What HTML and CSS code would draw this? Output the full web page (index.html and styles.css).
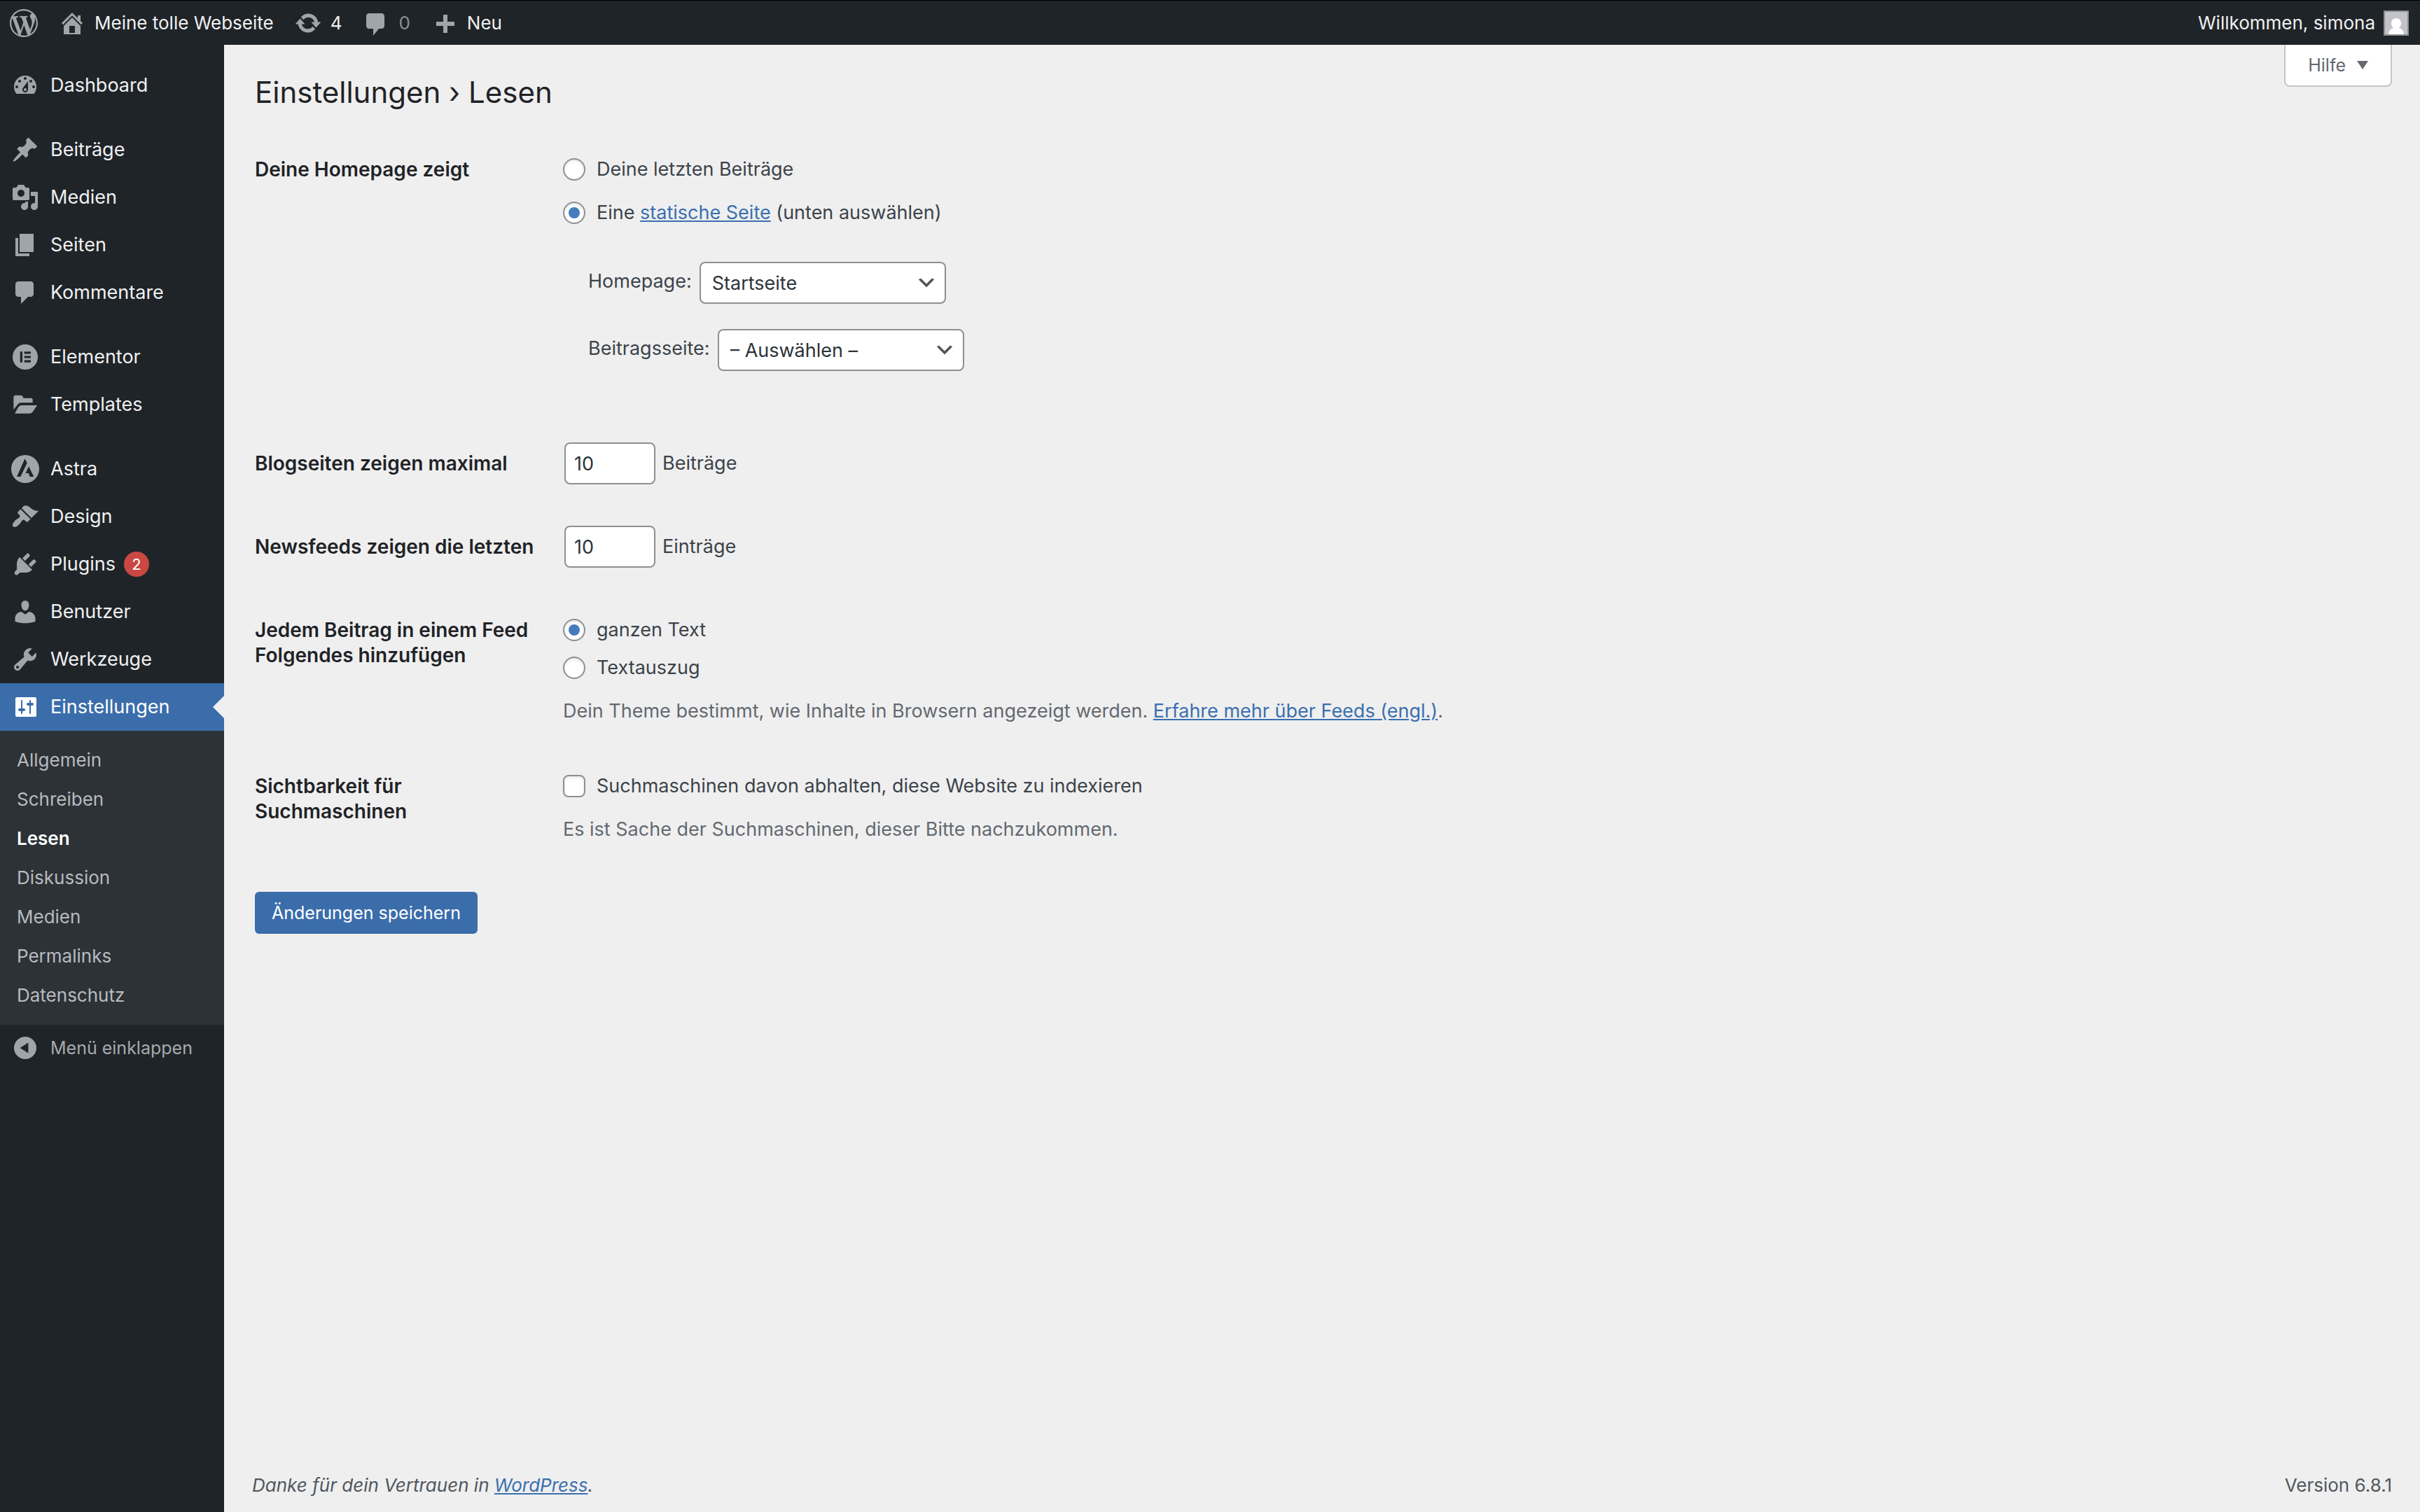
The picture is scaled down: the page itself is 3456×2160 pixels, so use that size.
FILE: index.html
```html
<!DOCTYPE html>
<html lang="de">
<head>
  <meta charset="UTF-8">
  <meta name="viewport" content="width=device-width, initial-scale=1">
  <title>Einstellungen › Lesen</title>
  <link rel="stylesheet" href="styles.css">
</head>
<body>
  <header class="adminbar">
    <a href="#" class="bar-item" aria-label="Über WordPress">
      <svg class="icon" viewBox="0 0 20 20"><path d="M20 10c0-5.51-4.49-10-10-10C4.48 0 0 4.49 0 10c0 5.52 4.48 10 10 10 5.51 0 10-4.48 10-10zM7.78 15.37L4.37 6.22c.55-.02 1.17-.08 1.17-.08.5-.06.44-1.13-.06-1.11 0 0-1.45.11-2.37.11-.18 0-.37 0-.58-.01C4.12 2.69 6.87 1.11 10 1.11c2.33 0 4.45.87 6.05 2.34-.68-.11-1.65.39-1.65 1.58 0 .74.45 1.36.9 2.1.35.61.55 1.36.55 2.46 0 1.49-1.4 5-1.4 5l-3.03-8.37c.54-.02.82-.17.82-.17.5-.05.44-1.25-.06-1.22 0 0-1.44.12-2.38.12-.87 0-2.33-.12-2.33-.12-.5-.03-.56 1.2-.06 1.22l.92.08 1.26 3.41zM17.41 10c.24-.64.74-1.87.43-4.25.7 1.29 1.05 2.71 1.05 4.25 0 3.29-1.73 6.24-4.4 7.78.97-2.59 1.94-5.2 2.92-7.78zM6.1 18.09C3.12 16.65 1.11 13.53 1.11 10c0-1.3.23-2.48.72-3.59C3.25 10.3 4.67 14.2 6.1 18.09zm4.03-6.63l2.58 6.98c-.86.29-1.76.45-2.71.45-.79 0-1.57-.11-2.29-.33.81-2.38 1.62-4.74 2.42-7.1z"/></svg>
    </a>
    <a href="#" class="bar-item">
      <svg class="icon" viewBox="0 0 20 20"><path d="M16 8.5l1.53 1.53-1.06 1.06L10 4.6l-6.47 6.47-1.06-1.06L10 2.5l4 4v-2h2v4zm-6-2.46l6 5.99V18H4v-5.97zM12 17v-5H8v5h4z"/></svg>
      Meine tolle Webseite
    </a>
    <a href="#" class="bar-item">
      <svg class="icon" viewBox="0 0 20 20"><path d="M10.2 3.28c3.53 0 6.43 2.61 6.92 6h2.08l-3.5 4-3.5-4h2.32c-.45-1.97-2.21-3.45-4.32-3.45-1.45 0-2.73.71-3.54 1.78L4.95 5.66C6.23 4.2 8.11 3.28 10.2 3.28zm-.4 13.44c-3.52 0-6.43-2.61-6.92-6H.8l3.5-4c1.17 1.33 2.33 2.67 3.5 4H5.48c.45 1.97 2.21 3.45 4.32 3.45 1.45 0 2.73-.71 3.54-1.78l1.71 1.95c-1.28 1.46-3.15 2.38-5.25 2.38z"/></svg>
      4
    </a>
    <a href="#" class="bar-item muted">
      <svg class="icon" viewBox="0 0 20 20"><path d="M5 3h9c1.1 0 2 .9 2 2v7c0 1.1-.9 2-2 2h-2l-4 5v-5H5c-1.1 0-2-.9-2-2V5c0-1.1.9-2 2-2z"/></svg>
      0
    </a>
    <a href="#" class="bar-item">
      <svg class="icon" viewBox="0 0 20 20"><path d="M17 9v3h-5v5H9v-5H4V9h5V4h3v5z"/></svg>
      Neu
    </a>
    <a href="#" class="bar-item account">
      Willkommen, simona
      <svg class="avatar" viewBox="0 0 36 36"><path fill="#8c8f94" d="M0 0h36v36H0z"/><path fill="#c3c4c7" d="M2 2h32v32H2z"/><path fill="#fff" d="M18 11c4 0 7 3 7 7 0 3-1 5-3 7 4 1 7 4 7 9H7c0-5 3-8 7-9-2-2-3-4-3-7 0-4 3-7 7-7z"/></svg>
    </a>
  </header>

  <div class="layout">
    <nav class="menu" aria-label="Hauptmenü">
      <ul class="menu-group">
        <li><a href="#" class="menu-link">
          <svg class="icon" viewBox="0 0 20 20"><path d="M3.76 16h12.48c1.1-1.37 1.76-3.11 1.76-5 0-4.42-3.58-8-8-8s-8 3.58-8 8c0 1.89.66 3.63 1.76 5zM10 4c.55 0 1 .45 1 1s-.45 1-1 1-1-.45-1-1 .45-1 1-1zM6 6c.55 0 1 .45 1 1s-.45 1-1 1-1-.45-1-1 .45-1 1-1zm8 0c.55 0 1 .45 1 1s-.45 1-1 1-1-.45-1-1 .45-1 1-1zm-5.37 5.55L12 7v6c0 1.1-.9 2-2 2s-2-.9-2-2c0-.57.24-1.08.63-1.45zM4 10c.55 0 1 .45 1 1s-.45 1-1 1-1-.45-1-1 .45-1 1-1zm12 0c.55 0 1 .45 1 1s-.45 1-1 1-1-.45-1-1 .45-1 1-1zm-5 3c0-.55-.45-1-1-1s-1 .45-1 1 .45 1 1 1 1-.45 1-1z"/></svg>
          Dashboard</a></li>
      </ul>
      <ul class="menu-group">
        <li><a href="#" class="menu-link">
          <svg class="icon" viewBox="0 0 20 20"><path d="M10.44 3.02l1.82-1.82 6.36 6.35-1.83 1.82c-1.05-.68-2.48-.57-3.41.36l-.75.75c-.92.93-1.04 2.35-.35 3.41l-1.83 1.82-2.41-2.41-2.8 2.79c-.42.42-3.38 2.71-3.8 2.29s1.86-3.39 2.28-3.81l2.79-2.79L4.1 9.36l1.83-1.82c1.05.69 2.48.57 3.4-.36l.75-.75c.93-.92 1.05-2.35.36-3.41z"/></svg>
          Beiträge</a></li>
        <li><a href="#" class="menu-link">
          <svg class="icon" viewBox="0 0 20 20"><path d="M13 11V4c0-.55-.45-1-1-1h-1.67L9 1H5L3.67 3H2c-.55 0-1 .45-1 1v7c0 .55.45 1 1 1h10c.55 0 1-.45 1-1zM7 4.5c1.38 0 2.5 1.12 2.5 2.5S8.38 9.5 7 9.5 4.5 8.38 4.5 7 5.62 4.5 7 4.5zM14 6h5v10.5c0 1.38-1.12 2.5-2.5 2.5S14 17.88 14 16.5s1.12-2.5 2.5-2.5c.17 0 .34.02.5.05V9h-3V6zm-4 8.05V13h2v3.5c0 1.38-1.12 2.5-2.5 2.5S7 17.88 7 16.5 8.12 14 9.5 14c.17 0 .34.02.5.05z"/></svg>
          Medien</a></li>
        <li><a href="#" class="menu-link">
          <svg class="icon" viewBox="0 0 20 20"><path d="M6 15V2h10v13H6zm-1 1h8v2H3V5h2v11z"/></svg>
          Seiten</a></li>
        <li><a href="#" class="menu-link">
          <svg class="icon" viewBox="0 0 20 20"><path d="M5 2h9c1.1 0 2 .9 2 2v7c0 1.1-.9 2-2 2h-2l-5 5v-5H5c-1.1 0-2-.9-2-2V4c0-1.1.9-2 2-2z"/></svg>
          Kommentare</a></li>
      </ul>
      <ul class="menu-group">
        <li><a href="#" class="menu-link">
          <svg class="icon" viewBox="0 0 40 40"><path fill-rule="evenodd" d="M20 2a18 18 0 1 0 0 36 18 18 0 0 0 0-36zM12.7 12.3h3.3v15.4h-3.3zM18.7 12.3h9.3v3.1h-9.3zM18.7 18.5h9.3v3.1h-9.3zM18.7 24.6h9.3v3.1h-9.3z"/></svg>
          Elementor</a></li>
        <li><a href="#" class="menu-link">
          <svg class="icon" viewBox="0 0 120 120"><path d="M10 82V29q0-9 9-9h22q8 0 10 8l1 4h32q8 0 8 8v12H44q-10 0-16 7z"/><path d="M15 98l15-26q5-9 14-9h67l-18 27q-5 8-14 8z"/></svg>
          Templates</a></li>
      </ul>
      <ul class="menu-group">
        <li><a href="#" class="menu-link">
          <svg class="icon" viewBox="0 0 40 40"><path fill-rule="evenodd" d="M20 0a20 20 0 1 0 0 40 20 20 0 0 0 0-40zM19.5 5.3l3.2 6.2L13.3 31H8zM25 16.3L32.3 31H26.7l-1.9-5h-4.3z"/></svg>
          Astra</a></li>
        <li><a href="#" class="menu-link">
          <svg class="icon" viewBox="0 0 20 20"><path d="M14.48 11.06L7.41 3.99l1.5-1.5c.5-.56 2.3-.47 3.51.32 1.21.8 1.43 1.28 2.91 2.1 1.18.64 2.45 1.26 4.45.85zm-.71.71L6.7 4.7 4.93 6.47c-.39.39-.39 1.02 0 1.41l1.06 1.06c.39.39.39 1.03 0 1.42-.6.6-1.43 1.11-2.21 1.69-.35.26-.7.53-1.01.84C1.43 14.23.4 16.08 1.4 17.07c.99 1 2.84-.03 4.18-1.36.31-.31.58-.66.85-1.02.57-.78 1.08-1.61 1.69-2.21.39-.39 1.02-.39 1.41 0l1.06 1.06c.39.39 1.02.39 1.41 0z"/></svg>
          Design</a></li>
        <li><a href="#" class="menu-link">
          <svg class="icon" viewBox="0 0 20 20"><path d="M13.11 4.36L9.87 7.6 8 5.73l3.24-3.24c.35-.34 1.05-.2 1.56.32.52.51.66 1.21.31 1.55zm-8 1.77l.91-1.12 9.01 9.01-1.19.84c-.71.71-2.63 1.16-3.82 1.16H6.14L4.9 17.26c-.59.59-1.54.59-2.12 0-.59-.58-.59-1.53 0-2.12l1.24-1.24v-3.88c0-1.13.4-3.19 1.09-3.89zm7.26 3.97l3.24-3.24c.34-.35 1.04-.21 1.55.31.52.51.66 1.21.31 1.55l-3.24 3.25z"/></svg>
          Plugins <span class="badge">2</span></a></li>
        <li><a href="#" class="menu-link">
          <svg class="icon" viewBox="0 0 20 20"><path d="M10 9.25c-2.27 0-2.73-3.44-2.73-3.44C7 4.02 7.82 2 9.97 2c2.16 0 2.98 2.02 2.71 3.81 0 0-.41 3.44-2.68 3.44zm0 2.57L12.72 10c2.39 0 4.52 2.33 4.52 4.53v2.49s-3.65 1.13-7.24 1.13c-3.65 0-7.24-1.13-7.24-1.13v-2.49c0-2.25 1.94-4.48 4.47-4.48z"/></svg>
          Benutzer</a></li>
        <li><a href="#" class="menu-link">
          <svg class="icon" viewBox="0 0 20 20"><path d="M16.68 9.77c-1.34 1.34-3.3 1.67-4.95.99l-5.41 6.52c-.99.99-2.59.99-3.58 0s-.99-2.59 0-3.57l6.52-5.42c-.68-1.65-.35-3.61.99-4.95 1.28-1.28 3.12-1.62 4.72-1.06l-2.89 2.89 2.82 2.82 2.86-2.87c.53 1.58.18 3.39-1.08 4.65zM3.81 16.21c.4.39 1.04.39 1.43 0 .4-.4.4-1.04 0-1.43-.39-.4-1.03-.4-1.43 0-.39.39-.39 1.03 0 1.43z"/></svg>
          Werkzeuge</a></li>
        <li>
          <a href="#" class="menu-link current">
            <svg class="icon" viewBox="0 0 20 20"><path d="M18 16V4c0-.55-.45-1-1-1H4c-.55 0-1 .45-1 1v12c0 .55.45 1 1 1h13c.55 0 1-.45 1-1zM8 11h1c.55 0 1 .45 1 1s-.45 1-1 1H8v1.5c0 .28-.22.5-.5.5s-.5-.22-.5-.5V13H6c-.55 0-1-.45-1-1s.45-1 1-1h1V5.5c0-.28.22-.5.5-.5s.5.22.5.5V11zm5-2h-1c-.55 0-1-.45-1-1s.45-1 1-1h1V5.5c0-.28.22-.5.5-.5s.5.22.5.5V7h1c.55 0 1 .45 1 1s-.45 1-1 1h-1v5.5c0 .28-.22.5-.5.5s-.5-.22-.5-.5V9z"/></svg>
            Einstellungen</a>
          <ul class="submenu">
            <li><a href="#">Allgemein</a></li>
            <li><a href="#">Schreiben</a></li>
            <li><a href="#" class="active" aria-current="page">Lesen</a></li>
            <li><a href="#">Diskussion</a></li>
            <li><a href="#">Medien</a></li>
            <li><a href="#">Permalinks</a></li>
            <li><a href="#">Datenschutz</a></li>
          </ul>
        </li>
      </ul>
      <button type="button" class="collapse">
        <svg class="icon" viewBox="0 0 20 20"><path fill-rule="evenodd" d="M10 2a8 8 0 1 0 0 16 8 8 0 0 0 0-16zM12.2 6.3v7.4L6.3 10z"/></svg>
        Menü einklappen
      </button>
    </nav>

    <div class="content">
      <div class="page-head">
        <h1>Einstellungen › Lesen</h1>
        <button type="button" class="help">Hilfe <span class="arrow"></span></button>
      </div>

      <form class="settings">
        <table class="form-table">
          <tr>
            <th scope="row">Deine Homepage zeigt</th>
            <td>
              <div class="choices wide">
                <div class="choice">
                  <input type="radio" name="front" id="front-posts">
                  <label for="front-posts">Deine letzten Beiträge</label>
                </div>
                <div class="choice">
                  <input type="radio" name="front" id="front-page" checked>
                  <label for="front-page">Eine <a href="#">statische Seite</a> (unten auswählen)</label>
                </div>
              </div>
              <ul class="page-selects">
                <li>
                  <label for="homepage">Homepage:</label>
                  <select id="homepage"><option>Startseite</option></select>
                </li>
                <li>
                  <label for="beitragsseite">Beitragsseite:</label>
                  <select id="beitragsseite"><option>– Auswählen –</option></select>
                </li>
              </ul>
            </td>
          </tr>
          <tr>
            <th scope="row"><label for="blogseiten">Blogseiten zeigen maximal</label></th>
            <td class="field">
              <div class="number"><input type="number" id="blogseiten" value="10" min="1"> Beiträge</div>
            </td>
          </tr>
          <tr>
            <th scope="row"><label for="newsfeeds">Newsfeeds zeigen die letzten</label></th>
            <td class="field">
              <div class="number"><input type="number" id="newsfeeds" value="10" min="1"> Einträge</div>
            </td>
          </tr>
          <tr>
            <th scope="row">Jedem Beitrag in einem Feed Folgendes hinzufügen</th>
            <td>
              <div class="choices">
                <div class="choice">
                  <input type="radio" name="feed" id="feed-full" checked>
                  <label for="feed-full">ganzen Text</label>
                </div>
                <div class="choice">
                  <input type="radio" name="feed" id="feed-excerpt">
                  <label for="feed-excerpt">Textauszug</label>
                </div>
              </div>
              <p class="description">Dein Theme bestimmt, wie Inhalte in Browsern angezeigt werden. <a href="#">Erfahre mehr über Feeds (engl.)</a>.</p>
            </td>
          </tr>
          <tr>
            <th scope="row">Sichtbarkeit für Suchmaschinen</th>
            <td>
              <div class="choice">
                <input type="checkbox" id="noindex">
                <label for="noindex">Suchmaschinen davon abhalten, diese Website zu indexieren</label>
              </div>
              <p class="description">Es ist Sache der Suchmaschinen, dieser Bitte nachzukommen.</p>
            </td>
          </tr>
        </table>
        <button type="submit" class="button">Änderungen speichern</button>
      </form>

      <footer class="footer">
        <p class="thanks">Danke für dein Vertrauen in <a href="#">WordPress</a>.</p>
        <p>Version 6.8.1</p>
      </footer>
    </div>
  </div>
</body>
</html>
```
FILE: styles.css
```css
* {
  box-sizing: border-box;
}

body {
  margin: 0;
  min-height: 100vh;
  display: flex;
  flex-direction: column;
  font-family: Inter, sans-serif;
  font-size: 26px;
  line-height: 36px;
  color: #3c434a;
  background-color: #efefef;
}

ul {
  list-style: none;
  margin: 0;
  padding: 0;
}

p {
  margin: 0;
}

a {
  color: #3a6fb0;
}

button, input, select {
  font-family: inherit;
}

/* Adminbar */
.adminbar {
  display: flex;
  align-items: center;
  gap: 29px;
  height: 64px;
  padding: 0 16px 0 14px;
  border-top: 1px solid #000;
  background-color: #1f2428;
}

.bar-item {
  display: flex;
  align-items: center;
  gap: 12px;
  font-size: 26px;
  color: #f0f0f1;
  text-decoration: none;
}

.bar-item.muted {
  color: #8a8e92;
}

.account {
  margin-left: auto;
}

.icon {
  flex: none;
  width: 40px;
  height: 40px;
  fill: #a0a5a9;
}

.avatar {
  width: 36px;
  height: 36px;
}

/* Menü links */
.layout {
  flex: 1;
  display: grid;
  grid-template-columns: 320px 1fr;
}

.menu {
  padding-top: 24px;
  background-color: #1f2428;
}

.menu-group + .menu-group {
  margin-top: 24px;
}

.menu-link {
  display: flex;
  align-items: center;
  gap: 16px;
  height: 68px;
  padding-left: 16px;
  font-size: 27px;
  color: #f0f0f1;
  text-decoration: none;
}

.menu-link.current {
  position: relative;
  color: #fff;
  background-color: #3b6dab;
}

.menu-link.current .icon {
  fill: #fff;
}

.menu-link.current::after {
  content: "";
  position: absolute;
  right: 0;
  top: 18px;
  border: 16px solid transparent;
  border-left-width: 0;
  border-right-color: #efefef;
}

.badge {
  width: 36px;
  height: 36px;
  margin-left: -4px;
  border-radius: 50%;
  font-size: 22px;
  text-align: center;
  color: #fff;
  background-color: #ca4742;
}

.submenu {
  padding: 14px 0;
  background-color: #2d3237;
}

.submenu a {
  display: block;
  padding: 10px 24px;
  font-size: 26px;
  color: #b7bbbf;
  text-decoration: none;
}

.submenu a.active {
  font-weight: 600;
  color: #fff;
}

.collapse {
  display: flex;
  align-items: center;
  gap: 16px;
  height: 66px;
  padding: 0 16px;
  border: none;
  font-size: 25px;
  color: #a7aaad;
  background: none;
}

/* Inhalt */
.content {
  display: flex;
  flex-direction: column;
}

.page-head {
  display: flex;
  justify-content: space-between;
  align-items: flex-start;
  padding: 0 40px 0 44px;
}

h1 {
  margin: 38px 0 22px;
  font-size: 42px;
  font-weight: 400;
  line-height: 60px;
  color: #1f2327;
}

.help {
  display: flex;
  align-items: center;
  gap: 16px;
  height: 60px;
  padding: 0 32px;
  border: 2px solid #c3c4c7;
  border-top: none;
  border-radius: 0 0 8px 8px;
  font-size: 25px;
  color: #646970;
  background-color: #fff;
}

.arrow {
  border: 8px solid transparent;
  border-top: 12px solid #646970;
  border-bottom: none;
}

.settings {
  flex: 1;
  padding: 0 40px 0 44px;
}

.form-table {
  width: 100%;
  margin-bottom: 40px;
  border-collapse: collapse;
  font-size: 27px;
}

.form-table th {
  width: 440px;
  padding: 40px 40px 31px 0;
  text-align: left;
  vertical-align: top;
  font-size: 28px;
  font-weight: 600;
  color: #1f2327;
}

.form-table td {
  padding: 40px 0 31px;
  vertical-align: top;
}

.form-table td.field {
  padding-top: 28px;
}

.choices {
  display: flex;
  flex-direction: column;
  gap: 18px;
}

.choices.wide {
  gap: 26px;
}

.choice {
  display: flex;
  align-items: center;
  gap: 16px;
}

input[type="radio"],
input[type="checkbox"] {
  appearance: none;
  display: grid;
  place-items: center;
  width: 32px;
  height: 32px;
  margin: 0;
  border: 2px solid #8c8f94;
  border-radius: 50%;
  background-color: #fff;
  box-shadow: inset 0 2px 4px rgba(0, 0, 0, 0.1);
}

input[type="checkbox"] {
  border-radius: 8px;
}

input[type="radio"]:checked::before {
  content: "";
  width: 16px;
  height: 16px;
  border-radius: 50%;
  background-color: #447cbe;
}

.page-selects {
  display: flex;
  flex-direction: column;
  gap: 36px;
  padding: 52px 0 43px 36px;
}

.page-selects li {
  display: flex;
  align-items: center;
  gap: 11px;
}

.page-selects label {
  margin-bottom: 4px;
}

select,
input[type="number"] {
  height: 60px;
  border: 2px solid #8c8f94;
  border-radius: 8px;
  font-size: 27px;
  color: #2c3338;
  background-color: #fff;
}

select {
  appearance: none;
  width: 352px;
  padding: 0 48px 0 16px;
  background-image: url("data:image/svg+xml,%3Csvg xmlns='http://www.w3.org/2000/svg' viewBox='0 0 20 20'%3E%3Cpath d='M5 6l5 5 5-5 2 1-7 7-7-7 2-1z' fill='%23555'/%3E%3C/svg%3E");
  background-repeat: no-repeat;
  background-position: right 10px center;
  background-size: 32px 32px;
}

.number {
  display: flex;
  align-items: center;
  gap: 10px;
  padding-left: 2px;
}

input[type="number"] {
  appearance: textfield;
  width: 130px;
  padding: 0 12px;
}

.description {
  margin-top: 26px;
  color: #646970;
}

.button {
  height: 60px;
  padding: 0 24px;
  border: none;
  border-radius: 6px;
  font-size: 25px;
  color: #fff;
  background-color: #3b6dab;
}

.footer {
  display: flex;
  justify-content: space-between;
  padding: 20px 40px;
  font-size: 26px;
  color: #50575e;
}

.thanks {
  font-style: italic;
}
```
